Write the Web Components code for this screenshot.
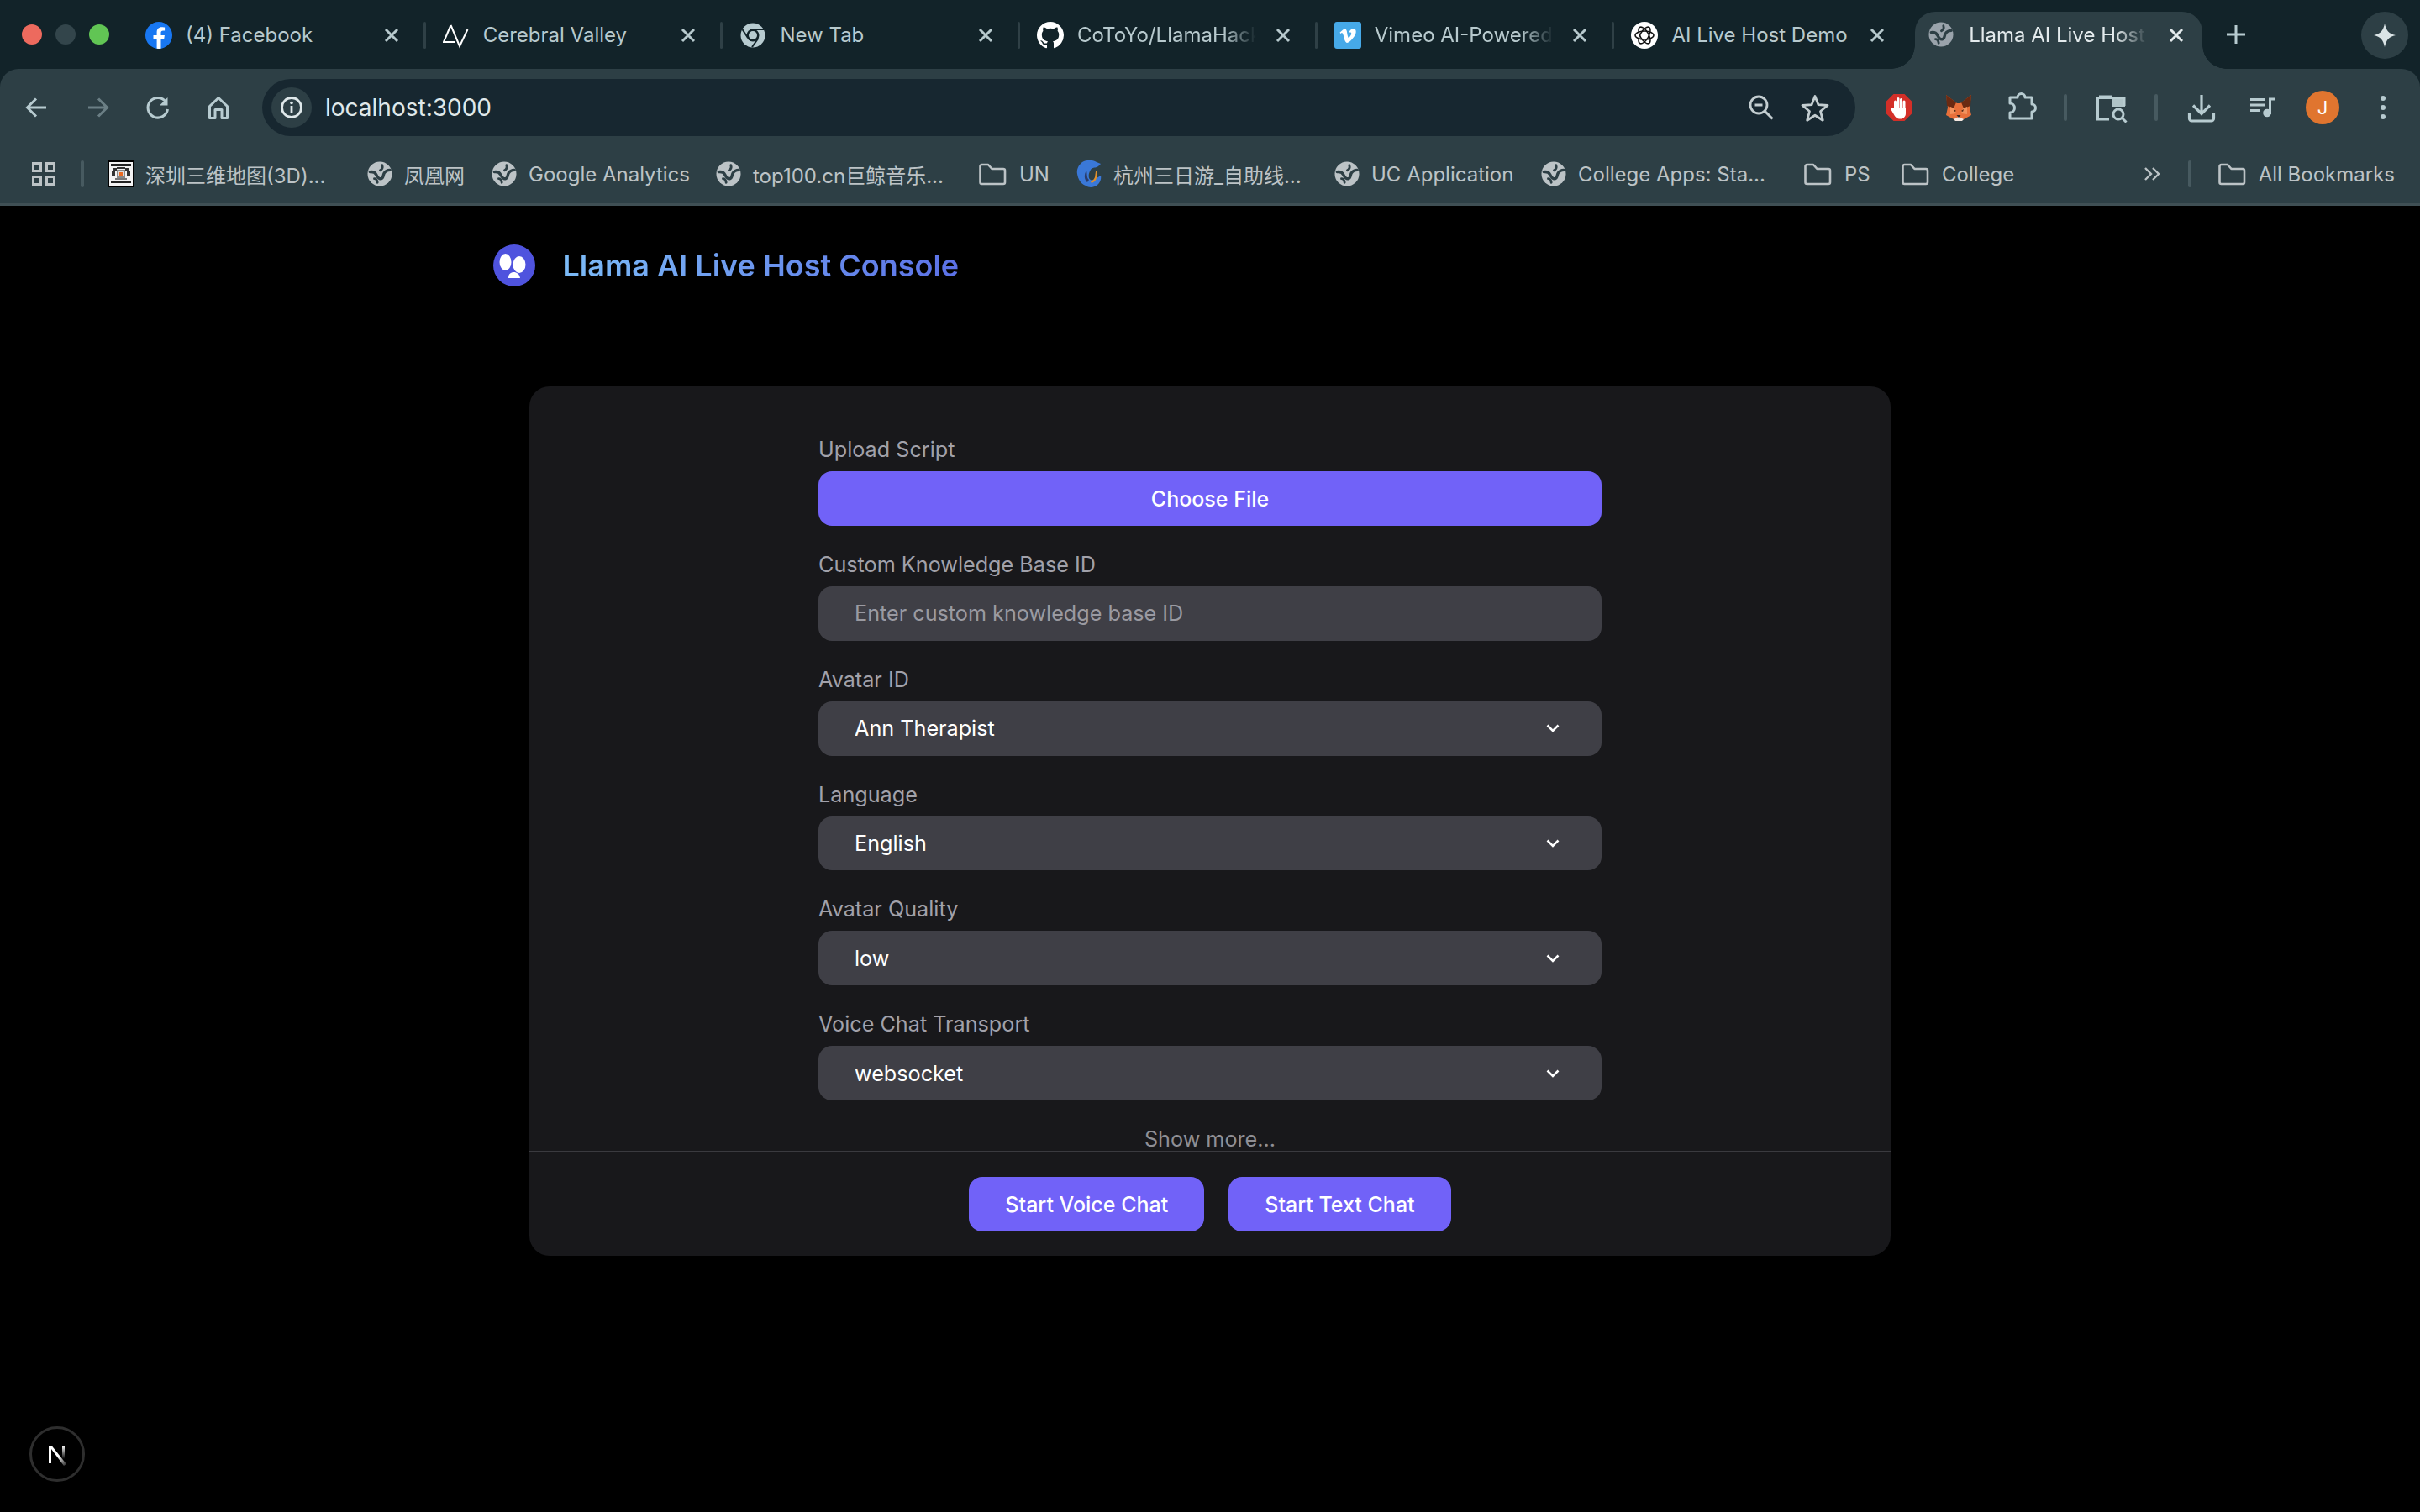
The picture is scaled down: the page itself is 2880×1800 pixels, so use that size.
<!DOCTYPE html>
<html lang="en">
<head>
<meta charset="utf-8">
<title>Llama AI Live Host Console</title>
<style>
html,body{margin:0;padding:0;width:2880px;height:1800px;overflow:hidden;background:#000;font-family:Inter,"Noto Sans CJK SC",sans-serif}
</style>
</head>
<body>
<browser-window>
  <tab-strip slot="tabs">
    <br-tab><x-icon slot="icon" name="fb"></x-icon>(4) Facebook</br-tab>
    <br-tab><x-icon slot="icon" name="cv"></x-icon>Cerebral Valley</br-tab>
    <br-tab><x-icon slot="icon" name="chrome"></x-icon>New Tab</br-tab>
    <br-tab fade><x-icon slot="icon" name="gh"></x-icon>CoToYo/LlamaHackathon</br-tab>
    <br-tab fade><x-icon slot="icon" name="vimeo"></x-icon>Vimeo AI-Powered Video</br-tab>
    <br-tab nosep><x-icon slot="icon" name="openai"></x-icon>AI Live Host Demo</br-tab>
    <br-tab active fade nosep><x-icon slot="icon" name="globe-a"></x-icon>Llama AI Live Host Console</br-tab>
  </tab-strip>
  <tool-bar slot="toolbar">
    <x-icon name="back"></x-icon>
    <x-icon name="forward" style="margin-left:24px"></x-icon>
    <x-icon name="reload" style="margin-left:24px"></x-icon>
    <x-icon name="home" style="margin-left:24px"></x-icon>
    <omni-box style="margin-left:28px">localhost:3000</omni-box>
    <x-icon name="adblock" style="margin-left:28px"></x-icon>
    <x-icon name="fox" style="margin-left:23px"></x-icon>
    <x-icon name="puzzle" style="margin-left:26px"></x-icon>
    <v-sep style="margin-left:27px"></v-sep>
    <x-icon name="tabsearch" style="margin-left:28px"></x-icon>
    <v-sep style="margin-left:28px"></v-sep>
    <x-icon name="download" style="margin-left:28px"></x-icon>
    <x-icon name="media" style="margin-left:25px"></x-icon>
    <user-avatar style="margin-left:27px">J</user-avatar>
    <x-icon name="kebab" style="margin-left:24px"></x-icon>
  </tool-bar>
  <bookmark-bar slot="bookmarks">
    <x-icon name="apps"></x-icon>
    <v-sep style="margin:0 28px 0 20px"></v-sep>
    <book-mark style="width:308px"><x-icon slot="icon" name="map"></x-icon>深圳三维地图(3D)...</book-mark>
    <book-mark style="width:148px"><x-icon slot="icon" name="globe"></x-icon>凤凰网</book-mark>
    <book-mark style="width:267px"><x-icon slot="icon" name="globe"></x-icon>Google Analytics</book-mark>
    <book-mark style="width:317px"><x-icon slot="icon" name="globe"></x-icon>top100.cn巨鲸音乐...</book-mark>
    <book-mark style="width:112px"><x-icon slot="icon" name="folder" style="margin-left:-6px"></x-icon>UN</book-mark>
    <book-mark style="width:307px"><x-icon slot="icon" name="dolphin"></x-icon>杭州三日游_自助线...</book-mark>
    <book-mark style="width:246px"><x-icon slot="icon" name="globe"></x-icon>UC Application</book-mark>
    <book-mark style="width:317px"><x-icon slot="icon" name="globe"></x-icon>College Apps: Sta...</book-mark>
    <book-mark style="width:116px"><x-icon slot="icon" name="folder" style="margin-left:-6px"></x-icon>PS</book-mark>
    <book-mark style="width:140px"><x-icon slot="icon" name="folder" style="margin-left:-6px"></x-icon>College</book-mark>
    <x-icon name="chevrons" style="margin-left:auto"></x-icon>
    <v-sep style="margin:0 35px 0 19px"></v-sep>
    <book-mark><x-icon slot="icon" name="folder" style="margin-left:-6px"></x-icon>All Bookmarks</book-mark>
  </bookmark-bar>

  <console-page>
    <console-header slot="header">Llama AI Live Host Console</console-header>
    <console-card slot="card">
      <form-field label="Upload Script"><ui-button block>Choose File</ui-button></form-field>
      <form-field label="Custom Knowledge Base ID"><ui-input placeholder>Enter custom knowledge base ID</ui-input></form-field>
      <form-field label="Avatar ID"><ui-input select>Ann Therapist</ui-input></form-field>
      <form-field label="Language"><ui-input select>English</ui-input></form-field>
      <form-field label="Avatar Quality"><ui-input select>low</ui-input></form-field>
      <form-field label="Voice Chat Transport"><ui-input select>websocket</ui-input></form-field>
      <span slot="more">Show more...</span>
      <ui-button slot="footer">Start Voice Chat</ui-button>
      <ui-button slot="footer">Start Text Chat</ui-button>
    </console-card>
    <dev-badge slot="badge"></dev-badge>
  </console-page>
</browser-window>

<script>
const FG='#b7cbd0', BG='#2d3f45', STRIP='#122329';
const globe=(c,d)=>`<svg width="30" height="30" viewBox="0 0 32 32"><circle cx="16" cy="16" r="15.500" fill="${c}"/><path d="M3.500 13.500c4-.5 6.500.5 8 3.500s3.500 6 6.500 5 2-4.500 3.500-7 4-4 7.500-4" fill="none" stroke="${d}" stroke-width="3.600" stroke-linecap="round"/><path d="M9 22c2 0 3.500 1.500 4 5M19 5c1 3 0 5-2.500 6.500" fill="none" stroke="${d}" stroke-width="3" stroke-linecap="round"/></svg>`;
const ICONS={
 fb:`<svg width="32" height="32" viewBox="0 0 32 32"><clipPath id="c"><circle cx="16" cy="16" r="16"/></clipPath><g clip-path="url(#c)"><rect width="32" height="32" fill="#1877f2"/><path d="M22.200 20.600l.7-4.600h-4.400v-3c0-1.300.6-2.500 2.600-2.500h2V6.600s-1.800-.3-3.500-.3c-3.600 0-6 2.200-6 6.100V16H9.500v4.600h4.100V32h4.900V20.600z" fill="#fff"/></g></svg>`,
 cv:`<svg width="32" height="32" viewBox="0 0 32 32"><path d="M9.500 4 1 24H15M9.500 4 20 29 29.500 9" fill="none" stroke="#fff" stroke-width="2"/></svg>`,
 chrome:`<svg width="32" height="32" viewBox="0 0 32 32"><circle cx="16" cy="16" r="14.500" fill="${FG}"/><circle cx="16" cy="16" r="7.500" fill="${STRIP}"/><circle cx="16" cy="16" r="5" fill="${FG}"/><path d="M16 9H29M10 19 3.500 9M22.500 19.500 15 30" stroke="${STRIP}" stroke-width="2"/></svg>`,
 gh:`<svg width="32" height="32" viewBox="0 0 16 16"><path fill="#fff" d="M8 0C3.580 0 0 3.580 0 8c0 3.540 2.290 6.530 5.470 7.590.4.070.55-.17.55-.38 0-.19-.01-.82-.01-1.490-2.010.37-2.530-.49-2.690-.94-.09-.23-.48-.94-.82-1.130-.28-.15-.68-.52-.01-.53.63-.01 1.080.58 1.230.82.72 1.210 1.870.87 2.330.66.070-.52.28-.87.51-1.070-1.780-.2-3.640-.89-3.640-3.950 0-.87.31-1.590.82-2.150-.08-.2-.36-1.020.08-2.120 0 0 .67-.21 2.200.82.64-.18 1.320-.27 2-.27.68 0 1.360.09 2 .27 1.530-1.040 2.200-.82 2.200-.82.44 1.100.16 1.920.08 2.120.51.56.82 1.270.82 2.150 0 3.070-1.870 3.750-3.650 3.950.29.25.54.73.54 1.480 0 1.070-.01 1.930-.01 2.200 0 .21.15.46.55.38A8.013 8.013 0 0016 8c0-4.420-3.580-8-8-8z"/></svg>`,
 vimeo:`<svg width="32" height="32" viewBox="0 0 32 32"><rect width="32" height="32" rx="3" fill="#46a9e8"/><path transform="translate(6.500 7) scale(.8)" fill="#fff" d="M23.977 6.416c-.105 2.338-1.739 5.543-4.894 9.609-3.268 4.247-6.026 6.370-8.290 6.370-1.409 0-2.578-1.294-3.553-3.881L5.322 11.400C4.603 8.816 3.834 7.522 3.010 7.522c-.179 0-.806.378-1.881 1.132L0 7.197c1.185-1.044 2.351-2.084 3.501-3.128C5.080 2.701 6.266 1.984 7.055 1.910c1.867-.18 3.016 1.100 3.447 3.838.465 2.953.789 4.789.971 5.507.539 2.450 1.131 3.674 1.776 3.674.502 0 1.256-.796 2.265-2.385 1.004-1.589 1.540-2.797 1.612-3.628.144-1.371-.395-2.061-1.614-2.061-.574 0-1.167.121-1.777.391 1.186-3.868 3.434-5.757 6.762-5.637 2.473.060 3.628 1.664 3.493 4.797z"/></svg>`,
 openai:`<svg width="32" height="32" viewBox="0 0 32 32"><circle cx="16" cy="16" r="16" fill="#fff"/><g fill="none" stroke="#111" stroke-width="1.500"><ellipse cx="16" cy="16" rx="11" ry="5" /><ellipse cx="16" cy="16" rx="11" ry="5" transform="rotate(60 16 16)"/><ellipse cx="16" cy="16" rx="11" ry="5" transform="rotate(120 16 16)"/></g></svg>`,
 'globe-a':globe('#9aa3ab',BG),
 globe:globe('#bcc3c6',BG),
 folder:`<svg width="34" height="28" viewBox="0 0 34 28"><path d="M2.500 5a2 2 0 0 1 2-2H12l4.500 5H30a2 2 0 0 1 2 2v14a2 2 0 0 1-2 2H4.500a2 2 0 0 1-2-2z" fill="none" stroke="#bcc3c6" stroke-width="2.600" stroke-linejoin="round"/></svg>`,
 map:`<svg width="32" height="32" viewBox="0 0 32 32" shape-rendering="crispEdges"><rect width="32" height="32" fill="#000"/><rect x="2" y="2" width="28" height="28" fill="#f2f2f2"/><rect x="4" y="4" width="24" height="3" fill="#222"/><path d="M6 9h5v3H6zM21 9h5v3h-5zM5 13h4v6H5zM23 13h4v6h-4zM11 8h10v2H11z" fill="#333"/><rect x="11" y="11" width="10" height="10" fill="#888"/><rect x="13" y="13" width="6" height="6" fill="#ddd"/><rect x="14" y="14" width="4" height="5" fill="#ea6a22"/><path d="M9 21h14v2H9z" fill="#777"/><rect x="4" y="25" width="24" height="2" fill="#222"/></svg>`,
 dolphin:`<svg width="32" height="34" viewBox="0 0 32 34"><path d="M8 3c5-3 12-3 17 0l5 2-3 3-2 1c-2 1-5 0-7 3-2 3-3 7-2 10 1 2 3 3 5 2l4-2 5-3c1 4-1 9-5 12-3 2-9 3-13 0C6 29 3 23 2 17 1 12 3 7 8 3z" fill="#3a78d8"/><path d="M13 13c1 4 0 9 3 11l-2 3c-4-3-4-10-1-14z" fill="#2a3c6a"/><path d="M26 14l-1 8c-1 3-3 5-6 6l-1-2c3-1 4-3 5-5l1-7z" fill="#e0902a"/></svg>`,
 apps:`<svg width="48" height="48" viewBox="0 0 48 48"><g fill="none" stroke="#bcc3c6" stroke-width="3"><rect x="11.500" y="11.500" width="9" height="9"/><rect x="27.500" y="11.500" width="9" height="9"/><rect x="11.500" y="27.500" width="9" height="9"/><rect x="27.500" y="27.500" width="9" height="9"/></g></svg>`,
 chevrons:`<svg width="48" height="48" viewBox="0 0 48 48"><path d="M16 17l7 7-7 7M25 17l7 7-7 7" fill="none" stroke="#bcc3c6" stroke-width="2.400"/></svg>`,
 back:`<svg width="48" height="48" viewBox="0 0 48 48"><path d="M35 24H13M23 13.500 12.500 24 23 34.500" fill="none" stroke="${FG}" stroke-width="3"/></svg>`,
 forward:`<svg width="48" height="48" viewBox="0 0 48 48"><path d="M13 24H35M25 13.500 35.500 24 25 34.500" fill="none" stroke="#6b7f85" stroke-width="3"/></svg>`,
 reload:`<svg width="48" height="48" viewBox="0 0 48 48"><path d="M33.500 17.500A11.800 11.800 0 1 0 35.500 26" fill="none" stroke="${FG}" stroke-width="3"/><path d="M35.500 12v9.500H26z" fill="${FG}"/></svg>`,
 home:`<svg width="48" height="48" viewBox="0 0 48 48"><path d="M13.500 22.500 24 12.500l10.500 10V36.500H28V26.500H20V36.500H13.500z" fill="none" stroke="${FG}" stroke-width="3" stroke-linejoin="round"/></svg>`,
 info:`<svg width="48" height="48" viewBox="0 0 48 48"><circle cx="24" cy="24" r="11.500" fill="none" stroke="#dfe8ea" stroke-width="2.800"/><rect x="22.600" y="22" width="2.800" height="9" fill="#dfe8ea"/><circle cx="24" cy="18.500" r="1.800" fill="#dfe8ea"/></svg>`,
 zoomout:`<svg width="48" height="48" viewBox="0 0 48 48"><circle cx="22" cy="21" r="10" fill="none" stroke="#c3cdd0" stroke-width="2.800"/><path d="M17.500 21h9" stroke="#c3cdd0" stroke-width="3"/><path d="M29 28l9.500 9.500" stroke="#c3cdd0" stroke-width="3"/></svg>`,
 star:`<svg width="48" height="48" viewBox="0 0 48 48"><path d="M24 10.500l4 10.200 11 .8-8.500 7 2.800 10.700L24 33.200l-9.300 6 2.800-10.700-8.500-7 11-.8z" fill="none" stroke="#c3cdd0" stroke-width="2.800" stroke-linejoin="round"/></svg>`,
 adblock:`<svg width="48" height="48" viewBox="0 0 48 48"><path d="M17.500 8h13L40 17.500v13L30.500 40h-13L8 30.500v-13z" fill="#d32f28"/><g fill="none" stroke="#fff" stroke-linecap="round" stroke-width="3"><path d="M19.500 28V17M23 28V13.500M26.500 28V14.500M30 28V17"/></g><path d="M18 24h14v7c0 4-3 6.500-6.500 6.500-4 0-5.500-1.500-7.500-5l-3.500-6c-.8-1.500 1.500-3 3-1.500z" fill="#fff"/></svg>`,
 fox:`<svg width="48" height="48" viewBox="0 0 48 48"><path d="M9 9l13 10h4L39 9l-2 15 2 9-9 5H18L9 33l2-9z" fill="#e8703a"/><path d="M9 9l12 9-3 7-8-3zM39 9 27 18l3 7 8-3z" fill="#6a2a12"/><path d="M14 23l5 2 2 6-7 1zM34 23l-5 2-2 6 7 1z" fill="#f2935e"/><path d="M18 38l6-3 6 3-2 2h-8z" fill="#f4e7df"/><path d="M21.500 33h5L24 36z" fill="#3c2a22"/><path d="M18 26l3 2-2 1zM30 26l-3 2 2 1z" fill="#4a2412"/></svg>`,
 puzzle:`<svg width="48" height="48" viewBox="0 0 48 48"><path d="M11 12H20A4.500 4.500 0 0 1 29 12H37V20A4.500 4.500 0 0 1 37 29V37H11V30A5.500 5.500 0 0 0 11 19z" fill="none" stroke="${FG}" stroke-width="3" stroke-linejoin="round"/></svg>`,
 tabsearch:`<svg width="48" height="48" viewBox="0 0 48 48"><path d="M22 38H8.500V12.500H40V22" fill="none" stroke="${FG}" stroke-width="3"/><path d="M26 11H41V23H26z" fill="${FG}" opacity=".95"/><path d="M26 11H10" stroke="${FG}" stroke-width="3"/><circle cx="33" cy="32" r="6" fill="none" stroke="${FG}" stroke-width="3"/><path d="M37.500 36.500l5 5" stroke="${FG}" stroke-width="3"/></svg>`,
 download:`<svg width="48" height="48" viewBox="0 0 48 48"><path d="M24 9V31M14 21.500 24 31.500 34 21.500" fill="none" stroke="${FG}" stroke-width="3.200"/><path d="M9.500 31v6a3 3 0 0 0 3 3h23a3 3 0 0 0 3-3v-6" fill="none" stroke="${FG}" stroke-width="3.200"/></svg>`,
 media:`<svg width="48" height="48" viewBox="0 0 48 48"><path d="M9 14.500H27M9 21H27M9 27.500H21" stroke="${FG}" stroke-width="3"/><path d="M32.500 32V14H39" fill="none" stroke="${FG}" stroke-width="3"/><circle cx="29" cy="30.500" r="4.800" fill="${FG}"/></svg>`,
 kebab:`<svg width="48" height="48" viewBox="0 0 48 48"><circle cx="24" cy="13" r="3" fill="${FG}"/><circle cx="24" cy="24" r="3" fill="${FG}"/><circle cx="24" cy="35" r="3" fill="${FG}"/></svg>`,
 spark:`<svg width="48" height="48" viewBox="0 0 48 48"><path d="M24 10c1.500 8 5 12.500 13 14-8 1.500-11.500 6-13 14-1.500-8-5-12.500-13-14 8-1.500 11.500-6 13-14z" fill="#dbe4e6"/></svg>`,
 plus:`<svg width="48" height="48" viewBox="0 0 48 48"><path d="M24 13V35M13 24H35" stroke="${FG}" stroke-width="3"/></svg>`
};
function def(tag,html,extra){
  const t=document.createElement('template');t.innerHTML=html;
  customElements.define(tag,class extends HTMLElement{
    constructor(){super();this.attachShadow({mode:'open'}).appendChild(t.content.cloneNode(true));}
    connectedCallback(){extra&&extra(this)}
  });
}
def('x-icon',`<style>:host{display:inline-flex;align-items:center;justify-content:center;flex:none;line-height:0}svg{display:block}</style><span id="i"></span>`,
  el=>{el.shadowRoot.getElementById('i').innerHTML=ICONS[el.getAttribute('name')]||'';});
def('v-sep',`<style>:host{display:block;flex:none;width:4px;height:32px;border-radius:2px;background:#475a60}</style>`);
def('browser-window',`<style>:host{display:flex;flex-direction:column;width:2880px;height:1800px;position:relative;background:#000}
 header{display:flex;flex-direction:column;flex:none;background:${STRIP}}</style>
 <header><slot name="tabs"></slot><slot name="toolbar"></slot><slot name="bookmarks"></slot></header><slot></slot>`);
def('tab-strip',`<style>:host{display:flex;height:82px;flex:none;align-items:flex-start;color:#b7c9cd;font:400 24px Inter,"Noto Sans CJK SC",sans-serif}
 .lights{display:flex;gap:16px;width:156px;box-sizing:border-box;padding:29px 0 0 26px;flex:none}
 .lights i{width:24px;height:24px;border-radius:50%}
 .tabs{display:flex;flex:none}
 .plus{margin:17px 0 0 16px;flex:none}
 .gem{margin-left:auto;margin-right:14px;margin-top:14px;width:56px;height:56px;border-radius:28px;background:${BG};display:flex;align-items:center;justify-content:center;flex:none}</style>
 <div class="lights"><i style="background:#ed6a5e"></i><i style="background:#33454b"></i><i style="background:#61c554"></i></div>
 <div class="tabs"><slot></slot></div>
 <x-icon class="plus" name="plus"></x-icon>
 <div class="gem"><x-icon name="spark"></x-icon></div>`);
def('br-tab',`<style>:host{display:flex;position:relative;flex:none;width:353.700px;height:82px;box-sizing:border-box;padding:26px 0 0 17px;align-items:flex-start}
 :host([active]){width:343px;color:#e3eaec}
 .bg{display:none}
 :host([active]) .bg{display:block;position:absolute;left:1px;right:0;top:14px;bottom:0;background:${BG};border-radius:24px 24px 0 0;z-index:0}
 :host([active]) .bg::before,:host([active]) .bg::after{content:"";position:absolute;bottom:0;width:28px;height:28px;background:radial-gradient(circle at var(--cx) 0,transparent 27.500px,${BG} 28px)}
 :host([active]) .bg::before{left:-28px;--cx:0}
 :host([active]) .bg::after{right:-28px;--cx:28px}
 .ic{width:32px;height:32px;flex:none;position:relative;z-index:1;line-height:0}
 .t{width:214px;margin-left:16px;flex:none;height:32px;line-height:32px;white-space:nowrap;overflow:hidden;position:relative;z-index:1}
 :host([fade]) .t{-webkit-mask-image:linear-gradient(to right,#000 174px,transparent 213px);mask-image:linear-gradient(to right,#000 174px,transparent 213px)}
 .x{width:36px;height:32px;margin-left:12.500px;flex:none;position:relative;z-index:1}
 :host([active]) .x{margin-left:15px}
 .s{width:3px;height:32px;margin-left:20px;background:#2f4046;border-radius:2px;flex:none}
 :host([nosep]) .s{visibility:hidden}</style>
 <div class="bg"></div><div class="ic"><slot name="icon"></slot></div><div class="t"><slot></slot></div>
 <svg class="x" viewBox="0 0 36 32"><path d="M11 9l14 14M25 9 11 23" stroke="currentColor" stroke-width="3"/></svg><div class="s"></div>`);
def('tool-bar',`<style>:host{display:flex;align-items:center;flex:none;height:80px;box-sizing:border-box;padding-left:20px;background:${BG};border-radius:22px 22px 0 0;padding-top:12px;padding-bottom:0}</style><slot></slot>`);
def('omni-box',`<style>:host{display:flex;align-items:center;flex:none;width:1896px;height:68px;box-sizing:border-box;padding:0 24px 0 11px;border-radius:34px;background:#172730;color:#dfe8ea;font:400 28px Inter,sans-serif}
 .b{width:48px;height:48px;border-radius:24px;background:${BG};flex:none}
 .u{margin-left:16px;flex:1}
 .z{margin-right:17px}</style><x-icon class="b" name="info"></x-icon><span class="u"><slot></slot></span><x-icon class="z" name="zoomout"></x-icon><x-icon name="star"></x-icon>`);
def('user-avatar',`<style>:host{display:flex;flex:none;align-items:center;justify-content:center;width:40px;height:40px;margin:0 4px;border-radius:50%;background:#e0752f;color:#fff;font:400 22px Inter,sans-serif}</style><slot></slot>`);
def('bookmark-bar',`<style>:host{display:flex;align-items:center;flex:none;height:83px;box-sizing:border-box;padding:13px 30px 3px 28px;background:${BG};border-bottom:3px solid #3f4f54}</style><slot></slot>`);
def('book-mark',`<style>:host{display:flex;align-items:center;flex:none;box-sizing:border-box;color:#bcc3c6;font:400 24px Inter,"Noto Sans CJK SC",sans-serif;white-space:nowrap}
 .i{width:32px;height:34px;display:flex;align-items:center;justify-content:center;flex:none;margin-right:13px;line-height:0}</style><div class="i"><slot name="icon"></slot></div><slot></slot>`);
def('console-page',`<style>:host{display:flex;flex-direction:column;flex:1;position:relative;background:#000}</style><slot name="header"></slot><slot name="card"></slot><slot name="badge"></slot>`);
def('console-header',`<style>:host{display:flex;align-items:center;flex:none;height:50px;margin:46px 0 0 587px}
 svg{display:block;flex:none}
 h1{margin:0 0 0 32.500px;font:600 36px/50px Inter,sans-serif;background:linear-gradient(100deg,#7cbcf7,#5b70e6);-webkit-background-clip:text;background-clip:text;color:transparent}</style>
 <svg width="50" height="50" viewBox="0 0 50 50"><circle cx="25" cy="25" r="25" fill="#4f53de"/><ellipse cx="14.500" cy="21" rx="7" ry="10" fill="#fff"/><ellipse cx="31" cy="24" rx="7.500" ry="10" fill="#fff"/><path d="M18 40c0-5 3-7 6.500-7s6.500 2 7.500 7z" fill="#fff"/></svg><h1><slot></slot></h1>`);
def('console-card',`<style>:host{display:flex;flex-direction:column;flex:none;width:1620px;height:1035px;margin:119px auto 0;background:#18181b;border-radius:24px;overflow:hidden}
 .body{display:flex;flex-direction:column;align-items:center;height:910px;box-sizing:border-box;padding-top:53px;overflow:hidden}
 .form{display:flex;flex-direction:column;gap:24px;width:932px}
 .more{margin-top:26px;height:40px;font:400 25.200px/40px Inter,sans-serif;color:#8f8f95}
 .foot{display:flex;justify-content:center;gap:29px;border-top:2px solid #3a3a3f;padding-top:29px}</style>
 <div class="body"><div class="form"><slot></slot></div><div class="more"><slot name="more"></slot></div></div><div class="foot"><slot name="footer"></slot></div>`);
def('form-field',`<style>:host{display:flex;flex-direction:column;gap:8px}
 label{height:40px;font:400 25.200px/44px Inter,sans-serif;color:#a1a1aa}</style><label></label><slot></slot>`,
 el=>{el.shadowRoot.querySelector('label').textContent=el.getAttribute('label');});
def('ui-button',`<style>:host{display:inline-flex;align-items:center;justify-content:center;box-sizing:border-box;height:65px;padding:0 43px;border-radius:16px;background:#7162f8;color:#fff;font:500 25px Inter,sans-serif}
 :host([block]){display:flex;width:100%}</style><slot></slot>`);
def('ui-input',`<style>:host{display:flex;align-items:center;justify-content:space-between;box-sizing:border-box;height:64.800px;padding:0 50px 0 43px;border-radius:16px;background:#3f3f46;color:#fff;font:400 25.200px Inter,sans-serif}
 :host([placeholder]){color:#9a9aa1}
 svg{display:none}
 :host([select]) svg{display:block}</style><span><slot></slot></span><svg width="16" height="10" viewBox="0 0 16 10"><path d="M1.500 1.500 8 8l6.500-6.500" fill="none" stroke="#fff" stroke-width="2.500"/></svg>`);
def('dev-badge',`<style>:host{display:flex;align-items:center;justify-content:center;position:absolute;left:35px;top:1453px;width:66px;height:66px;box-sizing:border-box;border-radius:50%;background:#000;border:3px solid #2e2e2e}</style>
 <svg width="28" height="28" viewBox="0 0 28 28"><defs><linearGradient id="a" x1="0" y1="0" x2="1" y2="1"><stop offset=".55" stop-color="#fff"/><stop offset="1" stop-color="#fff" stop-opacity=".1"/></linearGradient><linearGradient id="b" x1="0" y1="0" x2="0" y2="1"><stop offset="0" stop-color="#fff"/><stop offset="1" stop-color="#fff" stop-opacity="0"/></linearGradient></defs><rect x="4" y="4" width="3" height="21" fill="#fff"/><polygon points="4,4 7.500,4 25,26 22,28" fill="url(#a)"/><rect x="20" y="4" width="3" height="16" fill="url(#b)"/></svg>`);
</script>
</body>
</html>
